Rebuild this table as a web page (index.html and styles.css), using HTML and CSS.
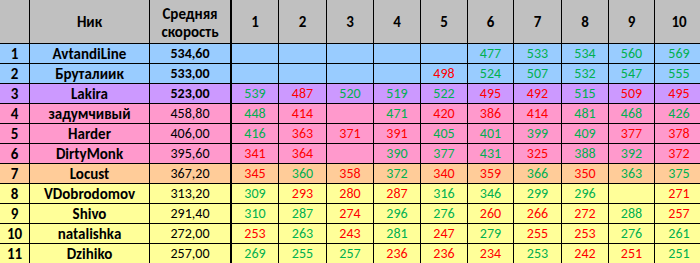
FILE: index.html
```html
<!DOCTYPE html>
<html lang="ru">
<head>
<meta charset="utf-8">
<title>Таблица</title>
<link rel="stylesheet" href="styles.css">
</head>
<body>
<div class="sheet">
  <div class="row head">
    <div></div><div>Ник</div><div class="two"><span>Средняя</span><span>скорость</span></div>
    <div>1</div><div>2</div><div>3</div><div>4</div><div>5</div><div>6</div><div>7</div><div>8</div><div>9</div><div>10</div>
  </div>
  <div class="row blue top">
    <div>1</div><div>AvtandiLine</div><div>534,60</div>
    <div></div><div></div><div></div><div></div><div></div><div class="g">477</div><div class="g">533</div><div class="g">534</div><div class="g">560</div><div class="g">569</div>
  </div>
  <div class="row blue top">
    <div>2</div><div>Бруталиик</div><div>533,00</div>
    <div></div><div></div><div></div><div></div><div class="r">498</div><div class="g">524</div><div class="g">507</div><div class="g">532</div><div class="g">547</div><div class="g">555</div>
  </div>
  <div class="row purple top">
    <div>3</div><div>Lakira</div><div>523,00</div>
    <div class="g">539</div><div class="r">487</div><div class="g">520</div><div class="g">519</div><div class="g">522</div><div class="r">495</div><div class="r">492</div><div class="g">515</div><div class="r">509</div><div class="r">495</div>
  </div>
  <div class="row pink">
    <div>4</div><div>задумчивый</div><div>458,80</div>
    <div class="g">448</div><div class="r">414</div><div></div><div class="g">471</div><div class="r">420</div><div class="r">386</div><div class="r">414</div><div class="g">481</div><div class="g">468</div><div class="g">426</div>
  </div>
  <div class="row pink">
    <div>5</div><div>Harder</div><div>406,00</div>
    <div class="g">416</div><div class="r">363</div><div class="r">371</div><div class="r">391</div><div class="g">405</div><div class="g">401</div><div class="g">399</div><div class="g">409</div><div class="r">377</div><div class="r">378</div>
  </div>
  <div class="row pink">
    <div>6</div><div>DirtyMonk</div><div>395,60</div>
    <div class="r">341</div><div class="r">364</div><div></div><div class="g">390</div><div class="g">377</div><div class="g">431</div><div class="r">325</div><div class="g">388</div><div class="g">392</div><div class="r">372</div>
  </div>
  <div class="row orange">
    <div>7</div><div>Locust</div><div>367,20</div>
    <div class="r">345</div><div class="g">360</div><div class="r">358</div><div class="g">372</div><div class="r">340</div><div class="r">359</div><div class="g">366</div><div class="r">350</div><div class="g">363</div><div class="g">375</div>
  </div>
  <div class="row yellow">
    <div>8</div><div>VDobrodomov</div><div>313,20</div>
    <div class="g">309</div><div class="r">293</div><div class="r">280</div><div class="r">287</div><div class="g">316</div><div class="g">346</div><div class="g">299</div><div class="g">296</div><div></div><div class="r">271</div>
  </div>
  <div class="row yellow">
    <div>9</div><div>Shivo</div><div>291,40</div>
    <div class="g">310</div><div class="g">287</div><div class="r">274</div><div class="g">296</div><div class="g">276</div><div class="r">260</div><div class="r">266</div><div class="r">272</div><div class="g">288</div><div class="r">257</div>
  </div>
  <div class="row yellow">
    <div>10</div><div>natalishka</div><div>272,00</div>
    <div class="r">253</div><div class="g">263</div><div class="r">243</div><div class="g">281</div><div class="r">247</div><div class="g">279</div><div class="r">255</div><div class="r">253</div><div class="g">276</div><div class="g">261</div>
  </div>
  <div class="row yellow">
    <div>11</div><div>Dzihiko</div><div>257,00</div>
    <div class="g">269</div><div class="g">255</div><div class="g">257</div><div class="r">236</div><div class="r">236</div><div class="r">234</div><div class="g">253</div><div class="r">242</div><div class="r">251</div><div class="g">251</div>
  </div>
</div>
</body>
</html>
```

FILE: styles.css
```css
html, body {
  margin: 0;
  padding: 0;
  background: #ffffff;
  overflow: hidden;
}

.sheet {
  display: flex;
  flex-direction: column;
  row-gap: 1px;
  background: #000000;
  width: 704px;
  font-family: Carlito, Lato, "Open Sans", sans-serif;
  font-size: 14px;
  color: #000000;
}

.row {
  display: grid;
  grid-template-columns: 29px 119px 81px 46px 47px 46px 46px 46px 45px 47px 46px 45px 48px;
  column-gap: 1px;
  height: 19px;
}

.row > div {
  display: flex;
  align-items: center;
  justify-content: center;
  line-height: 1;
  padding-top: 1px;
  box-sizing: border-box;
  white-space: nowrap;
}

.row > div:nth-child(1),
.row > div:nth-child(2) {
  font-weight: bold;
  font-size: 15px;
}

.row > div:nth-child(3) {
  border-right: 1px solid #000000;
}

.row.top > div:nth-child(3) {
  font-weight: bold;
}

.head {
  height: 43px;
}

.head > div {
  background: #c0c0c0;
  font-weight: bold;
  font-size: 15px;
}

.head > div.two {
  flex-direction: column;
  line-height: 18px;
  padding-top: 2px;
}

.blue > div { background: #99ccff; }
.purple > div { background: #cc99ff; }
.pink > div { background: #ff99cc; }
.orange > div { background: #ffcc99; }
.yellow > div { background: #ffff99; }

.g { color: #00b050; }
.r { color: #ff0000; }
```
